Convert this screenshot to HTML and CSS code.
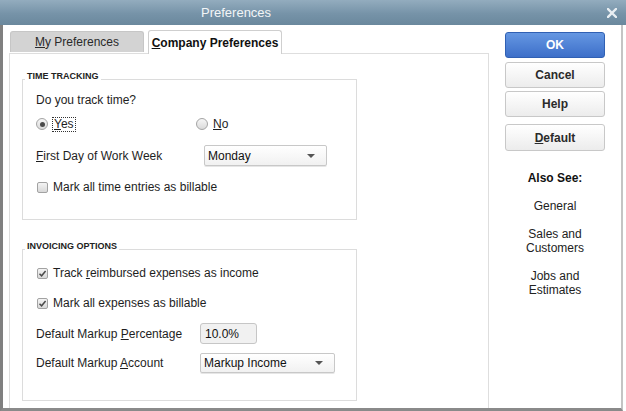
FILE: index.html
```html
<!DOCTYPE html>
<html>
<head>
<meta charset="utf-8">
<link rel="stylesheet" href="styles.css">
</head>
<body>
<div class="window">
  <div class="titlebar">
    <span class="title">Preferences</span>
    <svg class="close" width="10" height="10" viewBox="0 0 10 10"><path d="M1 1L9 9M9 1L1 9" stroke="#e9eef2" stroke-width="2.4" stroke-linecap="square"/></svg>
  </div>
  <div class="frame">
    <div class="main">
      <div class="tabs">
        <div class="tab"><u>M</u>y Preferences</div>
        <div class="tab active"><u>C</u>ompany Preferences</div>
      </div>
      <div class="panel">
        <fieldset class="group g1">
          <legend>TIME TRACKING</legend>
          <div class="content">
            <div class="row r-q">Do you track time?</div>
            <div class="row r-radio">
              <label class="radio-opt yes"><span class="radio on"></span><span class="focus"><u>Y</u>es</span></label>
              <label class="radio-opt"><span class="radio"></span><span><u>N</u>o</span></label>
            </div>
            <div class="row r-field">
              <span class="lbl w1"><u>F</u>irst Day of Work Week</span>
              <div class="select s1"><span>Monday</span><span class="arrow"></span></div>
            </div>
            <div class="row r-check">
              <span class="check"></span><span>Mark all time entries as billable</span>
            </div>
          </div>
        </fieldset>
        <fieldset class="group g2">
          <legend>INVOICING OPTIONS</legend>
          <div class="content">
            <div class="row r-check first">
              <span class="check on"><svg width="9" height="9" viewBox="0 0 9 9"><path d="M1.5 4.8L3.6 6.8L7.6 2" fill="none" stroke="#4a4a4a" stroke-width="1.5"/></svg></span><span>Track <u>r</u>eimbursed expenses as income</span>
            </div>
            <div class="row r-check r-check2">
              <span class="check on"><svg width="9" height="9" viewBox="0 0 9 9"><path d="M1.5 4.8L3.6 6.8L7.6 2" fill="none" stroke="#4a4a4a" stroke-width="1.5"/></svg></span><span>Mark all expenses as billable</span>
            </div>
            <div class="row r-field r-pct">
              <span class="lbl w2">Default Markup <u>P</u>ercentage</span>
              <div class="input">10.0%</div>
            </div>
            <div class="row r-field r-acct">
              <span class="lbl w2">Default Markup <u>A</u>ccount</span>
              <div class="select s2"><span>Markup Income</span><span class="arrow"></span></div>
            </div>
          </div>
        </fieldset>
      </div>
    </div>
    <div class="side">
      <div class="btn primary b-ok">OK</div>
      <div class="btn b-cancel">Cancel</div>
      <div class="btn b-help">Help</div>
      <div class="btn b-default"><u>D</u>efault</div>
      <div class="also">
        <div class="also-title">Also See:</div>
        <div class="link">General</div>
        <div class="link">Sales and<br>Customers</div>
        <div class="link">Jobs and<br>Estimates</div>
      </div>
    </div>
  </div>
</div>
</body>
</html>
```
FILE: styles.css
```css
* { box-sizing: border-box; }
html, body { margin: 0; padding: 0; background: #fff; }
body {
  font-family: "Liberation Sans", Arial, sans-serif;
  font-size: 12px;
  color: #1e1e1e;
}
u { text-decoration: underline; text-underline-offset: 1px; }

.window {
  width: 626px;
  height: 411px;
  display: flex;
  flex-direction: column;
  overflow: hidden;
}

.titlebar {
  height: 25px;
  flex: none;
  background: linear-gradient(#93acbe, #7693a8 55%, #6a889d);
  display: flex;
  align-items: center;
  padding-left: 201px;
  position: relative;
}
.title {
  color: #f2f5f7;
  font-size: 13px;
}
.close {
  position: absolute;
  right: 9px;
  top: 8px;
}

.frame {
  flex: 1;
  display: flex;
  border-left: 3px solid #808080;
  border-bottom: 3px solid #8a8a8a;
  border-right: 2px solid #c4c4c4;
  margin-right: 3px;
}

.main {
  width: 480px;
  margin-left: 6px;
  display: flex;
  flex-direction: column;
}

.tabs {
  height: 28px;
  display: flex;
  align-items: flex-end;
  gap: 4px;
  padding-left: 1px;
  position: relative;
  z-index: 1;
}
.tab {
  width: 134px;
  height: 21px;
  margin-bottom: 1px;
  background: #d3d3d3;
  border: 1px solid #c6c6c6;
  border-bottom: none;
  border-radius: 3px 3px 0 0;
  display: flex;
  align-items: center;
  justify-content: center;
  color: #2a2a2a;
}
.tab.active {
  height: 24px;
  margin-bottom: -1px;
  background: #fff;
  border-color: #cfcfcf;
  font-weight: bold;
  color: #111;
  padding-top: 1px;
}

.panel {
  flex: 1;
  border: 1px solid #dedede;
  border-bottom: none;
  padding: 17px 0 0 12px;
}

.group {
  width: 335px;
  margin: 0;
  padding: 0;
  border: 1px solid #dcdcdc;
}
.group legend {
  margin-left: 2px;
  padding: 0 2px 6px;
  font-size: 9px;
  line-height: 10px;
  font-weight: bold;
  color: #222;
}
.g2 { margin-top: 21px; }

.content {
  padding: 0 0 0 13px;
  display: flex;
  flex-direction: column;
}
.g1 .content { padding-top: 6px; padding-bottom: 25px; }
.g2 .content { padding-top: 9px; padding-bottom: 27px; }

.row { display: flex; align-items: center; }
.r-q { height: 14px; }
.r-radio { height: 16px; margin-top: 9px; }
.g1 .r-field { height: 21px; margin-top: 13px; }
.g1 .r-check { height: 14px; margin-top: 14px; }
.r-check { height: 14px; }
.r-check2 { margin-top: 16px; }
.r-pct { height: 21px; margin-top: 13px; }
.r-acct { height: 20px; margin-top: 9px; }

.radio-opt { display: flex; align-items: center; }
.radio-opt.yes { width: 160px; }
.radio {
  width: 12px;
  height: 12px;
  border-radius: 50%;
  border: 1px solid #a4a4a4;
  background: linear-gradient(#f6f6f6, #dadada);
  margin-right: 5px;
  display: flex;
  align-items: center;
  justify-content: center;
}
.radio.on::after {
  content: "";
  width: 5px;
  height: 5px;
  border-radius: 50%;
  background: #4a4a4a;
}
.focus {
  border: 1px dotted #333;
  padding: 0 1px;
  line-height: 13px;
  margin-left: -1px;
}

.check {
  width: 11px;
  height: 11px;
  border: 1px solid #a2a2a2;
  border-radius: 2px;
  background: linear-gradient(#f4f4f4, #d8d8d8);
  margin: 0 5px 0 1px;
  display: flex;
  align-items: center;
  justify-content: center;
}

.lbl.w1 { width: 168px; }
.lbl.w2 { width: 164px; }

.select {
  height: 21px;
  border: 1px solid #c8c8c8;
  border-radius: 2px;
  background: linear-gradient(#ffffff, #f1f1f1);
  display: flex;
  align-items: center;
  justify-content: space-between;
  padding: 0 11px 0 3px;
  color: #111;
  box-shadow: 0 1px 0 #e6e6e6;
}
.s1 { width: 123px; }
.s2 { width: 135px; height: 20px; }
.arrow {
  width: 0;
  height: 0;
  border-left: 4px solid transparent;
  border-right: 4px solid transparent;
  border-top: 4px solid #555;
}

.input {
  width: 57px;
  height: 21px;
  border: 1px solid #c6c6c6;
  border-radius: 3px;
  background: #f1f1f1;
  display: flex;
  align-items: center;
  padding-left: 4px;
  color: #111;
}

.side {
  flex: 1;
  padding: 7px 0 0 16px;
  display: flex;
  flex-direction: column;
}
.btn {
  width: 100px;
  height: 26px;
  border: 1px solid #c8c8c8;
  border-radius: 3px;
  background: linear-gradient(#ffffff, #ececec);
  display: flex;
  align-items: center;
  justify-content: center;
  font-weight: bold;
  color: #2b2b2b;
}
.btn.primary {
  background: linear-gradient(#6597e2, #3d6fc9);
  border-color: #3060b3;
  color: #fff;
}
.b-cancel { margin-top: 4px; }
.b-help { margin-top: 3px; }
.b-default { margin-top: 7px; height: 27px; }

.also {
  width: 100px;
  margin-top: 20px;
  display: flex;
  flex-direction: column;
  align-items: center;
  gap: 14px;
  text-align: center;
  line-height: 14px;
  color: #222;
}
.also-title { font-weight: bold; color: #111; }
```
